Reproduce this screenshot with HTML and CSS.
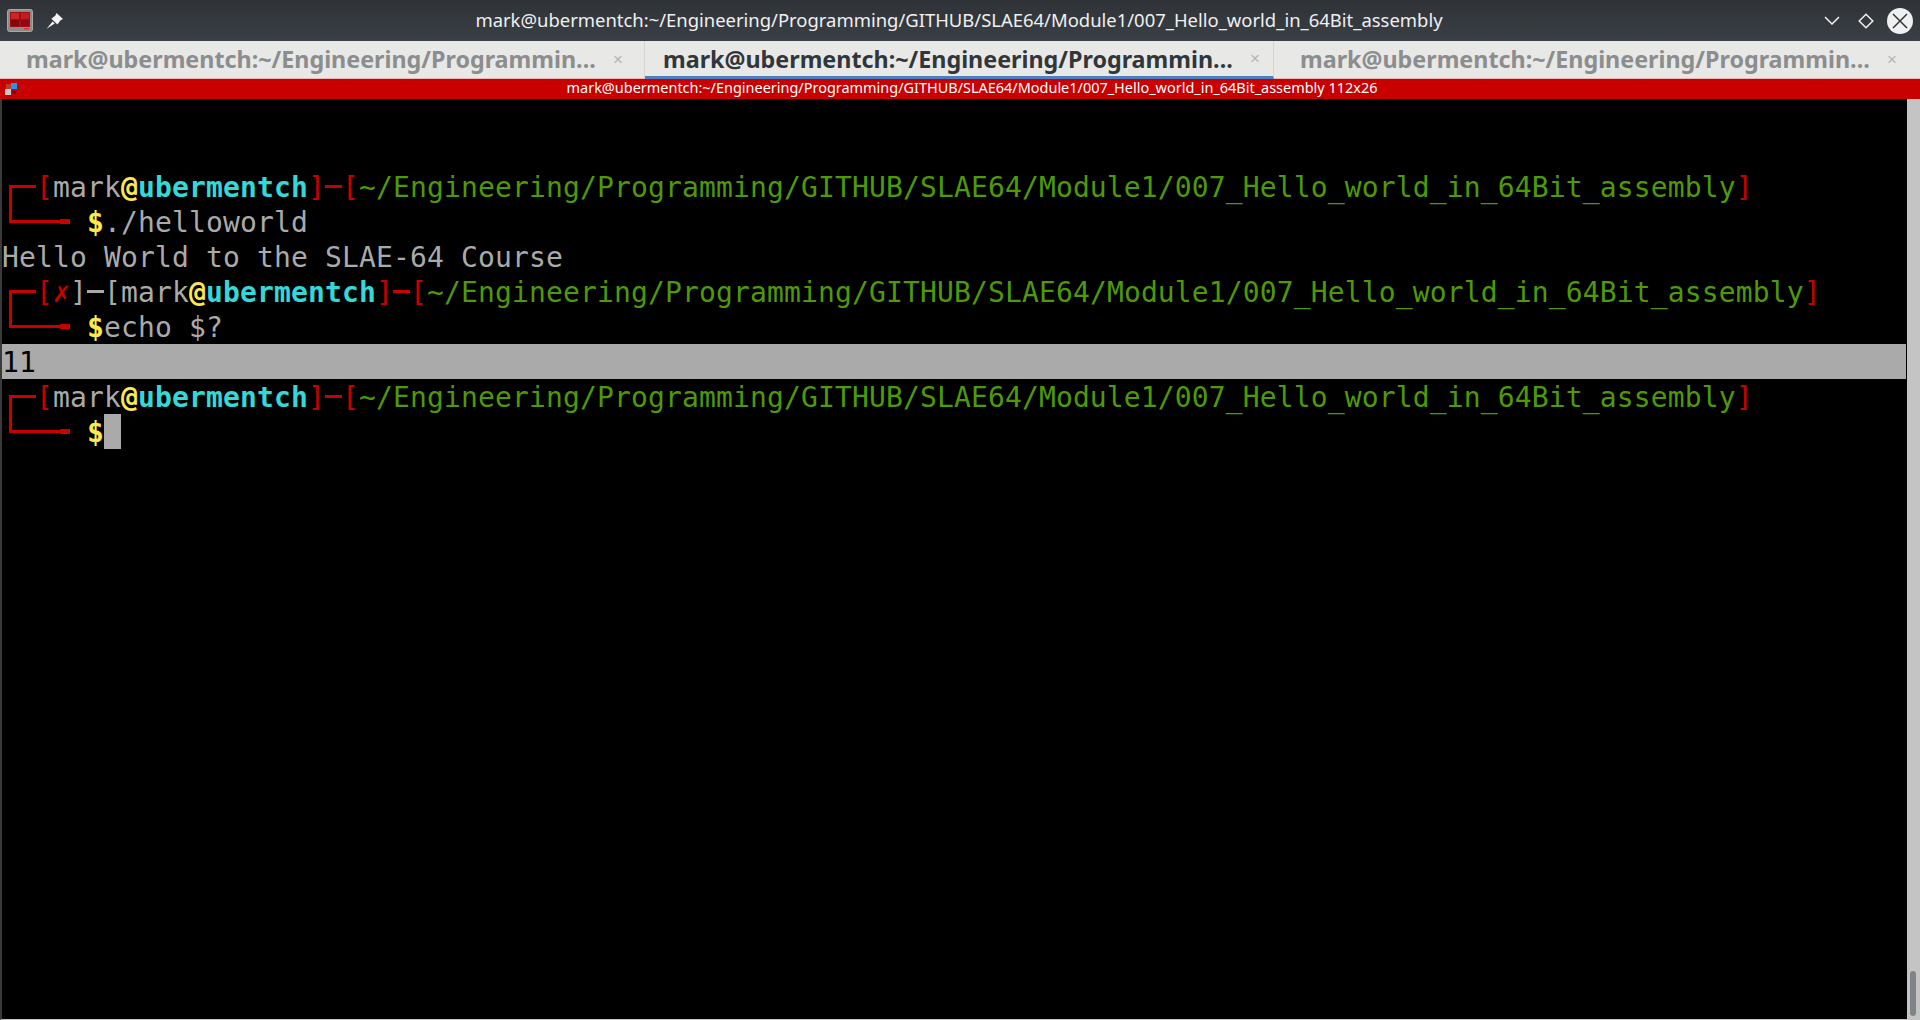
FILE: index.html
```html
<!DOCTYPE html>
<html lang="en">
<head>
<meta charset="utf-8">
<title>mark@ubermentch</title>
<link rel="stylesheet" href="styles.css">
</head>
<body>
<div class="window">
  <header class="titlebar">
    <div class="title-left">
      <svg class="app-icon" width="26" height="23" viewBox="0 0 26 23">
        <rect x="0.5" y="0.5" width="25" height="22" rx="2" fill="#8d8a88" stroke="#a9a6a4"/>
        <rect x="3" y="3" width="20" height="15" fill="#a40d12"/>
        <rect x="4" y="4" width="8" height="6" fill="#c9252b"/>
        <rect x="14" y="4" width="8" height="6" fill="#c01d22"/>
        <rect x="4" y="11" width="8" height="6" fill="#7e0a0d"/>
        <rect x="14" y="11" width="8" height="6" fill="#8d0b10"/>
        <rect x="17" y="19" width="5" height="1.5" fill="#d33"/>
      </svg>
      <svg class="pin-icon" width="17" height="16" viewBox="0 0 17 16">
        <path d="M10.5 0 L17 6 L14.6 7.2 L11.4 11.4 L5.4 5.8 L9.4 2.4 Z" fill="#f4f4f4"/>
        <path d="M6.6 8.4 L8.8 10.6 L0.6 15.8 Z" fill="#f4f4f4"/>
      </svg>
    </div>
    <div class="title-text">mark@ubermentch:~/Engineering/Programming/GITHUB/SLAE64/Module1/007_Hello_world_in_64Bit_assembly</div>
    <div class="title-buttons">
      <svg class="btn-min" width="16" height="9" viewBox="0 0 16 9"><path d="M1 1 L8 8 L15 1" fill="none" stroke="#f0f0f0" stroke-width="1.5"/></svg>
      <svg class="btn-max" width="16" height="16" viewBox="0 0 16 16"><path d="M8 1.2 L14.8 8 L8 14.8 L1.2 8 Z" fill="none" stroke="#f0f0f0" stroke-width="1.5"/></svg>
      <svg class="btn-close" width="26" height="26" viewBox="0 0 26 26"><circle cx="13" cy="13" r="13" fill="#eff0f1"/><path d="M6 6 L20 20 M20 6 L6 20" stroke="#31363b" stroke-width="1.5"/></svg>
    </div>
  </header>
  <nav class="tabs">
    <div class="tab tab-first"><span class="tab-label">mark@ubermentch:~/Engineering/Programmin...</span><span class="tab-close">×</span></div>
    <div class="tab tab-active"><span class="tab-label">mark@ubermentch:~/Engineering/Programmin...</span><span class="tab-close">×</span></div>
    <div class="tab tab-last"><span class="tab-label">mark@ubermentch:~/Engineering/Programmin...</span><span class="tab-close">×</span></div>
  </nav>
  <div class="session-bar">
    <svg class="split-icon" width="13" height="13" viewBox="0 0 13 13">
      <rect x="0.25" y="0.25" width="6" height="6" fill="#c0392b" stroke="#222" stroke-width="0.5"/>
      <rect x="6" y="0" width="6" height="6" fill="#1d99f3"/>
      <rect x="0" y="6" width="6" height="6" fill="#c8c8c8"/>
      <path d="M7 8 L12 8 L9.5 11 Z" fill="#500"/>
    </svg>
    <span class="session-title">mark@ubermentch:~/Engineering/Programming/GITHUB/SLAE64/Module1/007_Hello_world_in_64Bit_assembly 112x26</span>
  </div>
  <main class="terminal-wrap">
    <div class="terminal">
      <div class="row"></div>
      <div class="row"></div>
      <div class="row"><span class="cell corner-top"></span><span class="cell dash"></span><span class="r">[</span><span class="g">mark</span><span class="y">@</span><span class="c">ubermentch</span><span class="r">]</span><span class="cell dash"></span><span class="r">[</span><span class="n">~/Engineering/Programming/GITHUB/SLAE64/Module1/007_Hello_world_in_64Bit_assembly</span><span class="r">]</span></div>
      <div class="row"><span class="cell corner-bottom"></span><span class="cell dash-low"></span><span class="cell dash-low"></span><span class="cell arrow"></span><span class="cell"></span><span class="y">$</span><span class="g">./helloworld</span></div>
      <div class="row"><span class="g">Hello World to the SLAE-64 Course</span></div>
      <div class="row"><span class="cell corner-top"></span><span class="cell dash"></span><span class="r">[</span><span class="x">✗</span><span class="g">]</span><span class="cell dash dash-white"></span><span class="g">[mark</span><span class="y">@</span><span class="c">ubermentch</span><span class="r">]</span><span class="cell dash"></span><span class="r">[</span><span class="n">~/Engineering/Programming/GITHUB/SLAE64/Module1/007_Hello_world_in_64Bit_assembly</span><span class="r">]</span></div>
      <div class="row"><span class="cell corner-bottom"></span><span class="cell dash-low"></span><span class="cell dash-low"></span><span class="cell arrow"></span><span class="cell"></span><span class="y">$</span><span class="g">echo $?</span></div>
      <div class="row row-selected">11</div>
      <div class="row"><span class="cell corner-top"></span><span class="cell dash"></span><span class="r">[</span><span class="g">mark</span><span class="y">@</span><span class="c">ubermentch</span><span class="r">]</span><span class="cell dash"></span><span class="r">[</span><span class="n">~/Engineering/Programming/GITHUB/SLAE64/Module1/007_Hello_world_in_64Bit_assembly</span><span class="r">]</span></div>
      <div class="row"><span class="cell corner-bottom"></span><span class="cell dash-low"></span><span class="cell dash-low"></span><span class="cell arrow"></span><span class="cell"></span><span class="y">$</span><span class="cell cursor"></span></div>
    </div>
    <div class="scrollbar"><div class="thumb"></div></div>
  </main>
</div>
</body>
</html>
```
FILE: styles.css
```css
* { box-sizing: border-box; }
html, body { margin: 0; padding: 0; height: 100%; background: #000; overflow: hidden; }
.window { width: 1920px; height: 1020px; display: flex; flex-direction: column; }

.titlebar {
  height: 41px; flex: none; display: flex; align-items: center;
  background: linear-gradient(#2f3338, #3a3f45); padding: 0 7px;
  font: 18.45px "Noto Sans", sans-serif; color: #eff0f1;
}
.title-left { display: flex; align-items: center; gap: 13px; width: 200px; flex: none; }
.title-text { flex: 1; text-align: center; white-space: nowrap; padding: 0 2px 2px 0; }
.title-buttons { display: flex; align-items: center; width: 200px; flex: none; justify-content: flex-end; }
.btn-max { margin: 0 13px 0 18px; }

.tabs {
  height: 38px; flex: none; display: flex; background: #e8e8e6;
  font: bold 23.3px "Noto Sans", sans-serif; color: #8b8d8e;
  border-bottom: 1px solid #e6b8b8;
}
.tab { display: flex; align-items: center; padding-left: 26px; border-right: 1px solid #d4d4d2; white-space: nowrap; }
.tab-first { width: 645px; }
.tab-active { width: 629px; color: #31363b; padding-left: 18px; border-bottom: 3px solid #4a7fc1; height: 38px; }
.tab-last { flex: 1; padding-left: 26px; border-right: 0; }
.tab-label { width: 583px; flex: none; overflow: hidden; padding-bottom: 2px; }
.tab-active .tab-label { padding-bottom: 0; }
.tab-close { color: #b4b5b5; font: 17px "Liberation Sans", sans-serif; margin-left: 4px; }

.session-bar {
  height: 20px; flex: none; position: relative; background: #c80000; color: #fff;
  font: 14.46px/18px "Noto Sans", sans-serif; display: flex; justify-content: center; padding-left: 24px;
}
.split-icon { position: absolute; left: 5px; top: 4px; }
.session-title { white-space: nowrap; }

.terminal-wrap { flex: 1; display: flex; min-height: 0; border-left: 2px solid #3a3a3a; border-bottom: 1px solid #c4c4c4; }
.terminal {
  flex: 1; min-width: 0; font: 28px/37px "DejaVu Sans Mono", monospace; letter-spacing: 0.14px; color: #aaa;
  padding-right: 1px;
}
.row { height: 35px; white-space: pre; display: flex; }
.row-selected { background: #aaa; color: #000; }
.cell { width: 17px; height: 35px; flex: none; position: relative; }

.g { color: #aaa; }
.r { color: #c80000; }
.y { color: #fce94f; font-weight: bold; }
.c { color: #34d8d8; font-weight: bold; }
.n { color: #4e9a06; }
.x { color: #c80000; }

.dash::before, .corner-top::before, .dash-low::before, .corner-bottom::before, .arrow::before {
  content: ""; position: absolute; background: #c80000;
}
.dash::before { left: 0; right: 0; top: 16px; height: 3px; }
.dash-white::before { background: #aaa; }
.dash-low::before { left: 0; right: 0; top: 16px; height: 3px; }
.corner-top::before { left: 7px; right: 0; top: 16px; height: 3px; }
.corner-top::after { content: ""; position: absolute; background: #c80000; left: 7px; width: 3px; top: 16px; bottom: 0; }
.corner-bottom::before { left: 7px; right: 0; top: 16px; height: 3px; }
.corner-bottom::after { content: ""; position: absolute; background: #c80000; left: 7px; width: 3px; top: 0; height: 19px; }
.arrow::before { left: 0; width: 8px; top: 16px; height: 3px; }
.arrow::after { content: ""; position: absolute; background: #c80000; left: 7px; width: 10px; top: 15px; height: 5px; }
.cursor { background: #aaa; }

.scrollbar { width: 13px; flex: none; background: #c4c4c4; padding: 872px 4px 3px 3px; }
.thumb { height: 100%; background: #7f8586; border-radius: 3px; }
```
